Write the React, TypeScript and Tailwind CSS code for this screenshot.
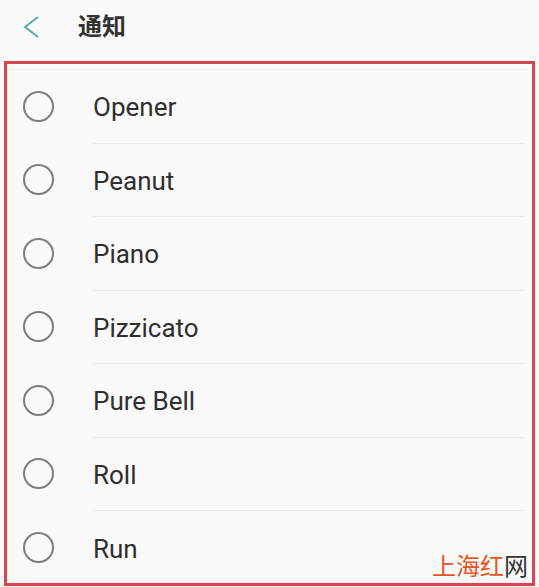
const SOUNDS = ["Opener", "Peanut", "Piano", "Pizzicato", "Pure Bell", "Roll", "Run"];

export default function App() {
  return (
    <div
      className="relative w-[539px] h-[587px] overflow-hidden bg-[#fafafa] text-[#2f2f2f]"
      style={{ fontFamily: "Roboto, 'Noto Sans CJK SC', sans-serif" }}
    >
      {/* header */}
      <div className="flex items-center h-[61px] pb-[8px]">
        <svg width="16" height="24" viewBox="0 0 16 24" className="ml-[23px]">
          <polyline points="15,2 2,12 15,22" fill="none" stroke="#5aa7b7" strokeWidth="2" />
        </svg>
        <span className="ml-[39px] text-[24px] font-bold leading-none text-[#333]">通知</span>
      </div>

      {/* list */}
      <div className="mx-[4px] h-[525px] border-[3px] border-[#d5474c] pt-[5px]">
        <div className="h-px bg-[#eeeeee] mr-[4px]" />
        {SOUNDS.map((name, i) => (
          <div key={name} className="flex flex-col h-[73.5px]">
            <div className="flex flex-1 items-center">
              <span className="ml-[16px] w-[31px] h-[31px] rounded-full border-2 border-[#7d7d7d] shrink-0" />
              <span className="ml-[39px] text-[26px] leading-none pt-[2px]">{name}</span>
            </div>
            {i < SOUNDS.length - 1 && <div className="h-px bg-[#ececec] ml-[86px] mr-[7px]" />}
          </div>
        ))}
      </div>

      {/* watermark */}
      <div className="absolute right-[11px] bottom-[10px] text-[24px] leading-none" style={{ fontFamily: "'Noto Sans CJK SC', sans-serif" }}>
        <span className="text-[#ea5420]">上海红</span>
        <span className="text-[#333]">网</span>
      </div>
    </div>
  );
}
